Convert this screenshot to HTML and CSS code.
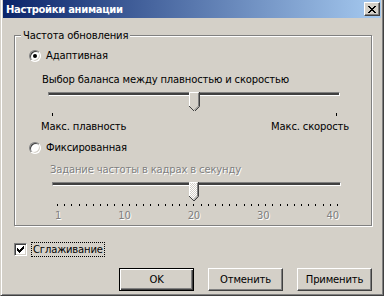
FILE: index.html
```html
<!DOCTYPE html>
<html>

<head>
    <title>Настройки анимации</title>
    <link rel="stylesheet" href="styles.css">
</head>

<body>
    <div class="window">
        <div class="titlebar">
            <span class="title">Настройки анимации</span>
            <button class="close-btn" type="button">
                <svg width="8" height="7" viewBox="0 0 8 7">
                    <path d="M0 0h2v1h1v1h2v-1h1v-1h2v1h-1v1h-1v1h-1v1h1v1h1v1h1v1h-2v-1h-1v-1h-2v1h-1v1h-2v-1h1v-1h1v-1h1v-1h-1v-1h-1v-1h-1z" fill="#000"/>
                </svg>
            </button>
        </div>

        <div class="content">
            <fieldset class="group">
                <legend>Частота обновления</legend>

                <div class="option option-first">
                    <span class="radio checked"></span>
                    <span>Адаптивная</span>
                </div>
                <div class="hint hint-balance">Выбор баланса между плавностью и скоростью</div>

                <div class="slider slider-balance">
                    <div class="track"></div>
                    <svg class="thumb" style="left: 141px" width="11" height="19" viewBox="0 0 11 19">
                        <polygon points="0,0 10,0 10,14 5,19 0,14" fill="#d4d0c8"/>
                        <polyline points="0.5,14 0.5,0.5 9.5,0.5" fill="none" stroke="#fff"/>
                        <polyline points="10.5,0 10.5,14.5 5.5,19.5 0,14" fill="none" stroke="#404040"/>
                        <polyline points="9.5,1 9.5,14 5.5,18" fill="none" stroke="#808080"/>
                    </svg>
                </div>
                <div class="ticks ticks-ends"><i></i><i></i></div>
                <div class="scale-labels labels-balance">
                    <span>Макс. плавность</span>
                    <span>Макс. скорость</span>
                </div>

                <div class="option option-second">
                    <span class="radio"></span>
                    <span>Фиксированная</span>
                </div>
                <div class="hint hint-rate disabled">Задание частоты в кадрах в секунду</div>

                <div class="slider slider-rate">
                    <div class="track"></div>
                    <svg class="thumb" style="left: 137px" width="10" height="19" viewBox="0 0 10 19">
                        <defs>
                            <pattern id="dither" width="2" height="2" patternUnits="userSpaceOnUse">
                                <rect width="2" height="2" fill="#fff"/>
                                <rect width="1" height="1" fill="#d4d0c8"/>
                                <rect x="1" y="1" width="1" height="1" fill="#d4d0c8"/>
                            </pattern>
                        </defs>
                        <polygon points="0,0 9,0 9,14 5,18 0,14" fill="url(#dither)"/>
                        <polyline points="0.5,14 0.5,0.5 8.5,0.5" fill="none" stroke="#fff"/>
                        <polyline points="9.5,0 9.5,14.5 5,19 0,14" fill="none" stroke="#404040"/>
                        <polyline points="8.5,1 8.5,14 5,17.5" fill="none" stroke="#808080"/>
                    </svg>
                </div>
                <div class="ticks ticks-rate"></div>
                <div class="scale-labels labels-rate disabled">
                    <span>1</span>
                    <span>10</span>
                    <span>20</span>
                    <span>30</span>
                    <span>40</span>
                </div>
            </fieldset>

            <div class="check-row">
                <span class="checkbox">
                    <svg width="7" height="7" viewBox="0 0 7 7">
                        <path d="M0 2h1v1h1v1h1v-1h1v-1h1v-1h1v-1h1v3h-1v1h-1v1h-1v1h-1v1h-1v-1h-1v-1h-1z" fill="#000"/>
                    </svg>
                </span>
                <span class="focus-label">Сглаживание</span>
            </div>

            <div class="buttons">
                <button class="btn default" type="button">OK</button>
                <button class="btn" type="button">Отменить</button>
                <button class="btn" type="button">Применить</button>
            </div>
        </div>
    </div>
</body>

</html>
```

FILE: styles.css
```css
body {
    margin: 0;
    font-family: "DejaVu Sans", sans-serif;
    font-size: 10px;
    line-height: 13px;
    letter-spacing: -0.15px;
    color: #000;
}

.window {
    width: 384px;
    height: 296px;
    box-sizing: border-box;
    background-color: #d4d0c8;
    border-right: 1px solid #404040;
    border-bottom: 1px solid #404040;
    border-left: 1px solid #d4d0c8;
    box-shadow: inset 1px 0 0 #fff, inset -1px -1px 0 #808080;
    padding: 0 2px 0 2px;
    display: flex;
    flex-direction: column;
}

.titlebar {
    height: 18px;
    display: flex;
    align-items: center;
    justify-content: space-between;
    padding: 0 1px 0 3px;
    background: linear-gradient(to right, #0a246a, #a6caf0);
}

.title {
    color: #fff;
    font-weight: bold;
    font-size: 10px;
    letter-spacing: -0.3px;
}

.close-btn {
    width: 16px;
    height: 14px;
    padding: 0;
    margin: 0;
    display: flex;
    align-items: center;
    justify-content: center;
    background-color: #d4d0c8;
    border: 1px solid;
    border-color: #fff #404040 #404040 #fff;
    box-shadow: inset -1px -1px 0 #808080;
}

.content {
    padding: 11px 9px 0 11px;
    display: flex;
    flex-direction: column;
}

.group {
    margin: 0;
    padding: 0 0 3px 0;
    border: 1px solid #808080;
    box-shadow: inset 1px 1px 0 #fff, 1px 1px 0 #fff;
    min-width: 0;
}

.group legend {
    margin-left: 6px;
    padding: 0 2px;
    background-color: #d4d0c8;
    line-height: 13px;
}

.option {
    display: flex;
    align-items: center;
    gap: 5px;
    margin-left: 14px;
    height: 13px;
}

.option-first {
    margin-top: 7px;
}

.option-second {
    margin-top: 8px;
}

.radio {
    width: 12px;
    height: 12px;
    box-sizing: border-box;
    border-radius: 50%;
    border: 1px solid;
    border-color: #808080 #fff #fff #808080;
    box-shadow: inset 1px 1px 0 #404040, inset -1px -1px 0 #d4d0c8;
    background-color: #fff;
    display: flex;
    align-items: center;
    justify-content: center;
}

.radio.checked::after {
    content: "";
    width: 4px;
    height: 4px;
    border-radius: 50%;
    background-color: #000;
}

.hint {
    height: 13px;
}

.hint-balance {
    margin: 11px 0 0 27px;
}

.hint-rate {
    margin: 9px 0 0 35px;
}

.disabled {
    color: #808080;
    text-shadow: 1px 1px 0 #fff;
}

.slider {
    position: relative;
    height: 19px;
    margin-top: 3px;
}

.slider-balance {
    margin-top: 1px;
    margin-left: 33px;
    width: 292px;
}

.slider-rate {
    margin-left: 37px;
    width: 289px;
}

.track {
    margin-top: 6px;
    height: 2px;
    border: 1px solid;
    border-color: #808080 #fff #fff #808080;
    background-color: #404040;
}

.thumb {
    position: absolute;
    top: 0;
    display: block;
}

.ticks {
    height: 3px;
    margin-top: 2px;
}

.ticks-ends {
    margin-left: 37px;
    width: 285px;
    display: flex;
    justify-content: space-between;
}

.ticks-ends i {
    width: 1px;
    height: 3px;
    background-color: #000;
}

.ticks-rate {
    margin-top: 3px;
    margin-left: 42px;
    width: 281px;
    height: 2px;
    background: repeating-linear-gradient(to right, #000 0 1px, transparent 1px 7.1795px);
}

.scale-labels {
    display: flex;
    justify-content: space-between;
    height: 13px;
}

.labels-balance {
    margin: 4px 0 0 26px;
    width: 308px;
}

.labels-rate {
    margin: 3px 0 0 40px;
    width: 284px;
}

.check-row {
    margin-top: 16px;
    display: flex;
    align-items: center;
    gap: 4px;
    height: 15px;
}

.checkbox {
    width: 13px;
    height: 13px;
    box-sizing: border-box;
    border: 1px solid;
    border-color: #808080 #fff #fff #808080;
    box-shadow: inset 1px 1px 0 #404040, inset -1px -1px 0 #d4d0c8;
    background-color: #fff;
    display: flex;
    align-items: center;
    justify-content: center;
}

.focus-label {
    border: 1px dotted #000;
    padding: 0 1px;
    line-height: 13px;
}

.buttons {
    margin-top: 11px;
    display: flex;
    justify-content: flex-end;
    gap: 14px;
}

.btn {
    width: 75px;
    height: 23px;
    margin: 0;
    padding: 0;
    font-family: "DejaVu Sans", sans-serif;
    font-size: 10px;
    letter-spacing: -0.15px;
    color: #000;
    background-color: #d4d0c8;
    border: 1px solid;
    border-color: #fff #404040 #404040 #fff;
    box-shadow: inset -1px -1px 0 #808080, inset 1px 1px 0 #d4d0c8;
}

.btn.default {
    border: 1px solid #000;
    box-shadow: inset 1px 1px 0 #fff, inset -1px -1px 0 #404040, inset -2px -2px 0 #808080;
}
```
